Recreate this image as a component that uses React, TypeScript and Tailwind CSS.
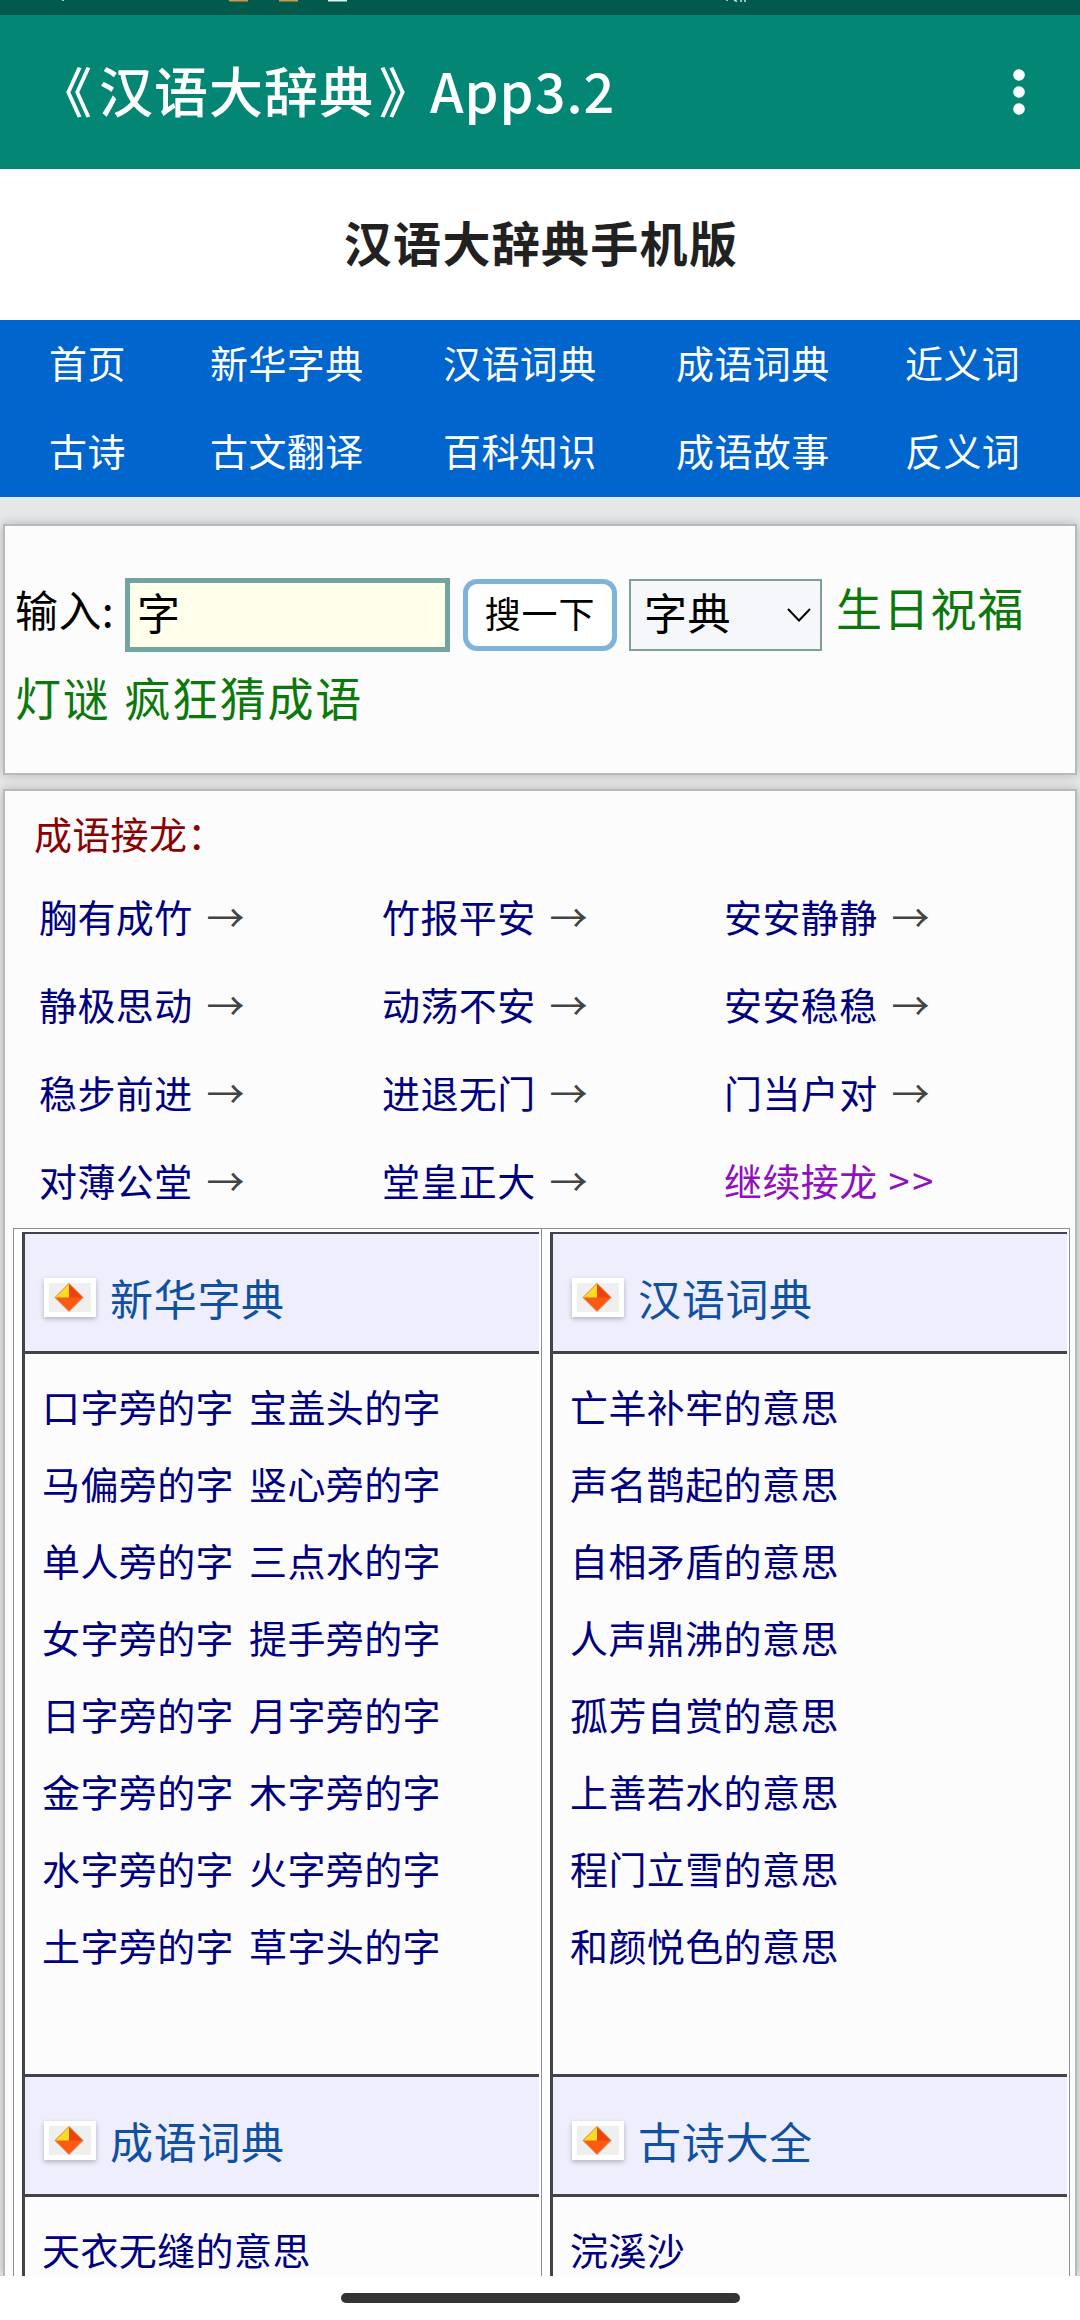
import React from 'react';

const navItems = [
  ['首页', '新华字典', '汉语词典', '成语词典', '近义词'],
  ['古诗', '古文翻译', '百科知识', '成语故事', '反义词'],
];

const idioms = [
  '胸有成竹', '竹报平安', '安安静静',
  '静极思动', '动荡不安', '安安稳稳',
  '稳步前进', '进退无门', '门当户对',
  '对薄公堂', '堂皇正大',
];

const radicals = [
  ['口字旁的字', '宝盖头的字'],
  ['马偏旁的字', '竖心旁的字'],
  ['单人旁的字', '三点水的字'],
  ['女字旁的字', '提手旁的字'],
  ['日字旁的字', '月字旁的字'],
  ['金字旁的字', '木字旁的字'],
  ['水字旁的字', '火字旁的字'],
  ['土字旁的字', '草字头的字'],
];

const words = [
  ['亡羊补牢的意思'],
  ['声名鹊起的意思'],
  ['自相矛盾的意思'],
  ['人声鼎沸的意思'],
  ['孤芳自赏的意思'],
  ['上善若水的意思'],
  ['程门立雪的意思'],
  ['和颜悦色的意思'],
];

function StatusBar() {
  return (
    <div className="h-[15px] shrink-0 bg-[#025a4c]">
      <svg width="1080" height="15" viewBox="0 0 1080 15" className="block">
        <rect x="62" y="0" width="2" height="1" fill="#9fd0c8" />
        <rect x="229" y="0" width="19" height="1.5" fill="#c79a45" />
        <rect x="279" y="0" width="19" height="1.5" fill="#c79a45" />
        <rect x="328" y="0" width="19" height="1.5" fill="#d8f5f0" />
        <path d="M727 0v1M734 0l3 1.5M741 0v2M745 0v2" stroke="#c5e8e2" strokeWidth="1.5" />
      </svg>
    </div>
  );
}

function AppBar() {
  return (
    <header className="flex h-[154px] shrink-0 items-center justify-between bg-[#038674] pl-[38px] pr-[54px] text-white">
      <span className="pb-[4px] text-[54px] leading-none font-medium tracking-[1px] whitespace-nowrap">
        <span className="mr-[6px]">《</span>汉语大辞典<span className="mr-[-4px] ml-[5px]">》</span>App3.2
      </span>
      <svg width="14" height="46" viewBox="0 0 14 46" fill="currentColor">
        <circle cx="7" cy="6" r="5.8" />
        <circle cx="7" cy="23" r="5.8" />
        <circle cx="7" cy="40" r="5.8" />
      </svg>
    </header>
  );
}

function Gem() {
  return (
    <span className="h-[39px] w-[52px] border-[5px] border-white bg-[#efefef] shadow-[0_2px_5px_rgba(0,0,0,0.25)]">
      <svg width="42" height="29" viewBox="0 0 42 29" className="block">
        <path d="M20 0.5L34 14.5L20 28.5L6 14.5Z" fill="#fb5a12" />
        <path d="M20 0.5L34 14.5H20Z" fill="#f0400f" />
        <path d="M20 0.5V14.5H6Z" fill="#ffdc1e" />
        <path d="M20 0.5L6 14.5L20 28.5L34 14.5Z" fill="none" stroke="#e2894f" strokeWidth="1" />
      </svg>
    </span>
  );
}

function Section({ title, rows, className }: { title: string; rows: string[][]; className: string }) {
  return (
    <section className={className}>
      <h2 className="flex h-[120px] items-center gap-[15px] border-b-3 border-[#414448] bg-[#eeeefc] pl-[19px] pt-[9px] text-[43px] leading-none tracking-[0.7px] text-[#0f50a3]">
        <Gem />
        <span className="-ml-px">{title}</span>
      </h2>
      <ul className="flex flex-col gap-[27px] pt-[27px] pl-[17px] text-[38px] leading-[50px] tracking-[0.4px] text-[#000080]">
        {rows.map((row) => (
          <li key={row[0]} className="flex gap-[15px] whitespace-nowrap">
            {row.map((item) => (
              <a key={item}>{item}</a>
            ))}
          </li>
        ))}
      </ul>
    </section>
  );
}

function Column({ sections }: { sections: { title: string; rows: string[][] }[] }) {
  return (
    <div className="flex-1 border-t border-l border-[#8d8f94] bg-white pt-[3px] pr-[2px] pl-[8px]">
      <div className="h-full border-t-2 border-l-3 border-[#414448] bg-[#fcfcfd]">
        <Section {...sections[0]} className="h-[840px]" />
        <Section {...sections[1]} className="border-t-3 border-[#414448]" />
      </div>
    </div>
  );
}

export default function App() {
  return (
    <div className="flex h-[2320px] w-[1080px] flex-col overflow-hidden bg-white font-['Noto_Sans_CJK_SC',sans-serif]">
      <StatusBar />
      <AppBar />

      <h1 className="flex h-[151px] shrink-0 items-center justify-center pb-[7px] pl-[2px] text-[48px] leading-none font-bold tracking-[1.3px] text-[#212121]">
        汉语大辞典手机版
      </h1>

      <nav className="grid h-[177px] shrink-0 grid-cols-[161px_233px_233px_229px_auto] grid-rows-2 items-center bg-[#0065cd] pl-[49px] text-[38px] leading-none tracking-[0.4px] text-white">
        {navItems.flat().map((item) => (
          <a key={item} className="pb-[5px]">{item}</a>
        ))}
      </nav>

      <main className="flex h-[1779px] shrink-0 flex-col gap-[14px] overflow-hidden bg-[#e6e7e8] px-[3px] pt-[27px]">
        <div className="h-[251px] shrink-0 border-2 border-[#b9b9b9] bg-[#fcfcfd] px-[10px] pt-[52px] shadow-[0_0_10px_rgba(0,0,0,0.22)]">
          <div className="flex h-[74px] items-center text-[43px] leading-none text-black">
            <span className="w-[110px] pb-[14px] tracking-[0.4px] whitespace-nowrap">输入:</span>
            <div className="flex h-[74px] w-[325px] items-center border-[5px] border-[#72a59e] bg-[#ffffec] pb-[8px] pl-[7px]">字</div>
            <button className="ml-[13px] h-[72px] w-[154px] rounded-[14px] border-[5px] border-[#7fb4da] bg-white pb-[6px] text-[36px] leading-none tracking-[0.8px]">
              搜一下
            </button>
            <div className="ml-[12px] flex h-[72px] w-[193px] items-center justify-between border-2 border-[#7f9f99] bg-[#f5f7fb] pr-[9px] pl-[13px] tracking-[0.6px]">
              <span className="pb-[8px]">字典</span>
              <svg width="24" height="14" viewBox="0 0 24 14" fill="none" stroke="#000" strokeWidth="2">
                <path d="M1 1l11 11.5L23 1" />
              </svg>
            </div>
            <a className="ml-[14px] pb-[19px] text-[46px] tracking-[1.2px] whitespace-nowrap text-[#0b780b]">生日祝福</a>
          </div>
          <div className="mt-[19px] flex gap-[14px] text-[46px] leading-[50px] tracking-[1.7px] text-[#0b780b]">
            <a>灯谜</a>
            <a>疯狂猜成语</a>
          </div>
        </div>

        <div className="flex flex-1 flex-col border-2 border-b-0 border-[#b9b9b9] bg-[#fcfcfd] shadow-[0_0_10px_rgba(0,0,0,0.22)]">
          <div className="h-[85px] shrink-0 pt-[23px] pl-[29px] text-[38px] leading-[38px] tracking-[0.3px] text-[#8b0000]">成语接龙：</div>
          <div className="grid h-[352px] shrink-0 grid-cols-[343px_342px_auto] auto-rows-[88px] pl-[34px] text-[38px] leading-[80px] tracking-[0.4px] text-[#000080]">
            {idioms.map((idiom) => (
              <div key={idiom} className="whitespace-nowrap">
                <a>{idiom}</a>
                <span className="ml-[14px] text-[#444]">→</span>
              </div>
            ))}
            <a className="text-[#9010c0]">
              继续接龙<span className="ml-[11px] tracking-[2.5px]">&gt;&gt;</span>
            </a>
          </div>

          <div className="mr-[5px] ml-[8px] flex flex-1 border-r border-[#8d8f94]">
            <Column
              sections={[
                { title: '新华字典', rows: radicals },
                { title: '成语词典', rows: [['天衣无缝的意思']] },
              ]}
            />
            <Column
              sections={[
                { title: '汉语词典', rows: words },
                { title: '古诗大全', rows: [['浣溪沙']] },
              ]}
            />
          </div>
        </div>
      </main>

      <footer className="flex flex-1 justify-center bg-white pt-[17px]">
        <div className="h-[10px] w-[399px] rounded-full bg-[#333]" />
      </footer>
    </div>
  );
}
